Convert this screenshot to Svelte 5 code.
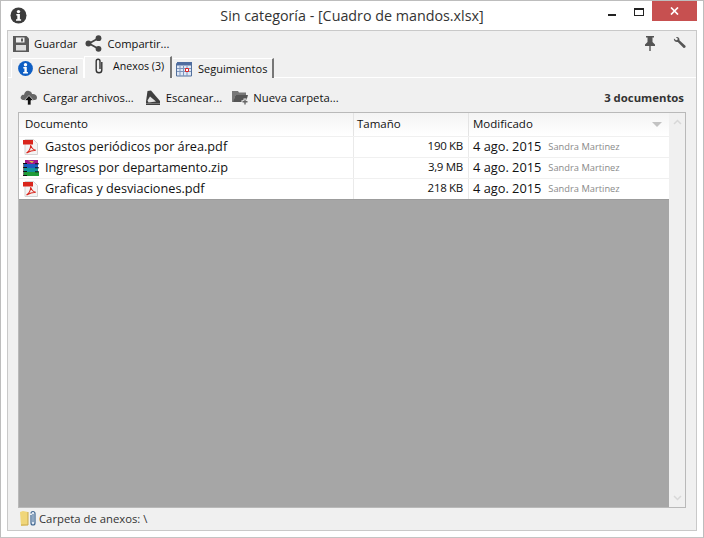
<script>
  const rows = [
    { name: 'Gastos periódicos por área.pdf', size: '190 KB', type: 'pdf' },
    { name: 'Ingresos por departamento.zip', size: '3,9 MB', type: 'zip' },
    { name: 'Graficas y desviaciones.pdf', size: '218 KB', type: 'pdf' }
  ];
</script>

<div class="window">
  <header class="titlebar">
    <svg class="app" width="17" height="17" viewBox="0 0 17 17"><circle cx="8.5" cy="8.5" r="8" fill="#3c3c3c"/><circle cx="8.5" cy="4.6" r="1.7" fill="#fff"/><path d="M6.3 7h3.600v5.200h1.200v1.600H6v-1.600h1.300V8.600h-1z" fill="#fff"/></svg>
    <div class="title">Sin categoría - [Cuadro de mandos.xlsx]</div>
    <div class="controls">
      <span class="ctl"><i class="min"></i></span>
      <span class="ctl"><i class="max"></i></span>
      <span class="close"><svg width="9" height="8" viewBox="0 0 9 8"><path d="M1 .5l7 7M8 .5l-7 7" stroke="#fff" stroke-width="1.700"/></svg></span>
    </div>
  </header>

  <div class="panel">
    <div class="toolbar">
      <button class="tool">
        <svg width="16" height="16" viewBox="0 0 16 16"><path d="M0 0h13.500L16 2.500V16H0z" fill="#5a5a5a"/><path d="M3 1.500h8.500v5H3z" fill="#eee"/><path d="M8 2.500h2v3H8z" fill="#5a5a5a"/><path d="M3 9h10v5.500H3z" fill="#ddd"/></svg>
        Guardar
      </button>
      <button class="tool share">
        <svg width="17" height="17" viewBox="0 0 17 17"><path d="M13 3.500L4 8.500l9 5" fill="none" stroke="#444" stroke-width="1.800"/><circle cx="13.500" cy="3.200" r="2.900" fill="#444"/><circle cx="3.400" cy="8.500" r="2.900" fill="#444"/><circle cx="13.500" cy="13.800" r="2.900" fill="#444"/></svg>
        Compartir...
      </button>
      <div class="spacer"></div>
      <svg class="pin" width="10" height="15" viewBox="0 0 10 15"><path d="M1 0h8v1.500H7.500V6L10 8.500V10H5.700v5H4.300v-5H0V8.500L2.500 6V1.500H1z" fill="#555"/></svg>
      <svg class="wrench" width="13" height="13" viewBox="0 0 13 13"><path d="M1 1.500L3 3.200l1.400-.3.300-1.500L2.900.2C5-.5 6.800 1 6.400 3.300l6 5.500c.9 1.200-.7 2.900-2 2L4.800 5C2.600 5.600.3 3.800 1 1.500z" fill="#555"/></svg>
    </div>

    <div class="tabs">
      <div class="tab first">
        <svg width="15" height="15" viewBox="0 0 15 15"><circle cx="7.500" cy="7.500" r="7.400" fill="#0f5fc4"/><circle cx="7.500" cy="3.800" r="1.700" fill="#fff"/><path d="M5.300 6h3.500v5h1.100v1.500H5.100V11h1.300V7.500H5.300z" fill="#fff"/></svg>
        <span>General</span>
      </div>
      <div class="tab active">
        <svg width="10" height="16" viewBox="0 0 10 16"><path d="M7.800 4v8a2.800 2.800 0 0 1-5.600 0V3.200a1.900 1.900 0 0 1 3.800 0V11" fill="none" stroke="#333" stroke-width="1.400"/></svg>
        <span>Anexos (3)</span>
      </div>
      <div class="tab third">
        <svg width="17" height="16" viewBox="0 0 17 16"><path d="M.5 2.500h15v12.500H.5z" fill="#dfe8f6" stroke="#53709c"/><path d="M1 1h15v3.500H1z" fill="#4f6d9f"/><path d="M4 5v10M7.500 5v10M11 5v10M1 7.500h14M1 10.500h14" stroke="#7d95bd"/><path d="M9.500 7.500h3v3h-3z" fill="#fff" stroke="#d22"/></svg>
        <span>Seguimientos</span>
      </div>
    </div>

    <div class="body">
      <div class="actions">
        <button class="act">
          <svg width="18" height="17" viewBox="0 0 18 17"><path d="M4 11C1 11 0 9 1 7.500 1.500 6 3 5.500 4 6 4.500 3 6.500 1 9 2c2 .5 3 2 3 3 2.500-.5 5 1 5 3.500S15 11 14 11z" fill="#666"/><path d="M9 6.500l4.500 5H11V16H7.500v-4.500H4.500z" fill="#111" stroke="#eee" stroke-width=".7"/></svg>
          Cargar archivos...
        </button>
        <button class="act scan">
          <svg width="16" height="16" viewBox="0 0 16 16"><path d="M1 15V11.500L2.500 1 6 .5l9 10.500v4z" fill="#3f3f3f"/><path d="M2.500 10.500l2.500-4 6 5-7.500 1z" fill="#e4e4e4"/><path d="M1 13.500h14" stroke="#777"/></svg>
          Escanear...
        </button>
        <button class="act folder">
          <svg width="17" height="16" viewBox="0 0 17 16"><path d="M0 1h6l1 1.500h7V5H3.500L1.500 12H0z" fill="#777"/><path d="M3.500 5H16l-2 7H1z" fill="#555"/><path d="M13 8.500v6.500M9.500 11.800h7" stroke="#f0f0f0" stroke-width="3"/><path d="M13 9.500v5M10.500 11.800h5" stroke="#666" stroke-width="1.400"/></svg>
          Nueva carpeta...
        </button>
        <div class="spacer"></div>
        <strong>3 documentos</strong>
      </div>

      <div class="table">
        <div class="main">
          <div class="thead">
            <div class="c1">Documento</div>
            <div class="c2">Tamaño</div>
            <div class="c3">Modificado<i class="sort"></i></div>
          </div>
          {#each rows as r}
            <div class="row">
              <div class="c1">
                {#if r.type === 'pdf'}
                  <svg width="16" height="16" viewBox="0 0 16 16"><path d="M2 .5h8.500l4 4v11H2z" fill="#f4f4f4" stroke="#d4d4d4"/><path d="M0 1h10v4.500H0z" fill="#d9251c"/><path d="M3.500 14c2.500-1.500 4-4.500 4.300-8 .5 2.800 2 4.700 5 5.200-3.200 0-6.500 1-9.300 2.800z" fill="none" stroke="#d9251c" stroke-width="1.100"/></svg>
                {:else}
                  <svg width="16" height="16" viewBox="0 0 16 16"><path d="M2 0h13v4H2z" fill="#a01a8c"/><path d="M5 .5l6 1-2 1.500z" fill="#e6c83c"/><path d="M1 4h14v4H1z" fill="#1a5fc0"/><path d="M1 8h14v4H1z" fill="#12929e"/><path d="M1 12h15v4H1z" fill="#1f9c38"/><path d="M0 3.500h4M0 7.500h4M0 11.500h4M0 15.500h4M12 3.800h4M12 7.800h4M12 11.800h4" stroke="#111"/><path d="M0 4v11" stroke="#222" stroke-width="1.200"/></svg>
                {/if}
                <span class="fname">{r.name}</span>
              </div>
              <div class="c2 num">{r.size}</div>
              <div class="c3"><span>4 ago. 2015</span><small>Sandra Martinez</small></div>
            </div>
          {/each}
          <div class="empty"></div>
        </div>
        <div class="scroll">
          <svg width="9" height="6" viewBox="0 0 9 6"><path d="M1 5l3.500-3.500L8 5" fill="none" stroke="#d8d8d8" stroke-width="1.500"/></svg>
          <svg width="9" height="6" viewBox="0 0 9 6"><path d="M1 1l3.500 3.500L8 1" fill="none" stroke="#d8d8d8" stroke-width="1.500"/></svg>
        </div>
      </div>

      <div class="footer">
        <svg width="17" height="17" viewBox="0 0 17 17"><path d="M0 2l3-1 5 1v13l-7 1z" fill="#f0d67a"/><path d="M8 2v13H1" fill="none" stroke="#c9a94c"/><path d="M11 5v8a2 2 0 0 0 4 0V3.500a2 2 0 0 0-4 0" fill="#dfe8f3" stroke="#3f6690" stroke-width="1.200"/><path d="M13 4v8" stroke="#3f6690"/></svg>
        <span>Carpeta de anexos: \</span>
      </div>
    </div>
  </div>
</div>

<style>
  :global(body) { margin: 0; }
  .window {
    box-sizing: border-box; width: 704px; height: 538px; background: #fff;
    border: 1px solid #bdbdbd; border-bottom-color: #c4c4c4; padding: 0 6px 6px;
    display: flex; flex-direction: column;
    font-family: "Open Sans", "Noto Sans", sans-serif; font-size: 11.300px; color: #111;
  }
  .titlebar { height: 29px; flex: none; display: flex; align-items: flex-start; position: relative; }
  .app { position: absolute; left: 3px; top: 6px; }
  .title { flex: 1; text-align: center; font-size: 14.300px; line-height: 20px; padding-top: 5px; color: #333; }
  .controls { position: absolute; right: 0; top: 0; display: flex; }
  .ctl { width: 25px; height: 20px; position: relative; }
  .min { position: absolute; left: 6px; top: 13px; width: 8px; height: 2px; background: #222; }
  .max { position: absolute; left: 7px; top: 7px; width: 8px; height: 5px; border: 1px solid #222; border-top-width: 2px; }
  .close { width: 45px; height: 20px; background: #c75050; display: flex; align-items: center; justify-content: center; }
  .panel {
    flex: 1; min-height: 0; display: flex; flex-direction: column; background: #f0f0f0;
    border: 1px solid #c9c9c9;
  }
  .toolbar { height: 25px; flex: none; display: flex; align-items: center; padding: 0 10px 0 5px; }
  button { all: unset; display: flex; align-items: center; }
  .tool { gap: 5px; margin-right: 8px; font-size: 11.200px; }
  .share { gap: 5px; margin-right: 0; }
  .spacer { flex: 1; }
  .pin { margin-right: 18px; }
  .tabs { height: 22px; flex: none; display: flex; align-items: flex-end; padding-left: 3px; box-sizing: border-box; position: relative; z-index: 1; margin-bottom: -1px; }
  .tab { box-sizing: border-box; display: flex; align-items: center; height: 20px; background: #f0f0f0; }
  .tab.first { width: 73px; gap: 5px; padding-left: 6px; border: 1px solid #fff; border-bottom: 0; border-radius: 2px 2px 0 0; font-size: 10.900px; }
  .tab.first span { padding-top: 1px; }
  .tab.active { width: 88px; height: 22px; gap: 9px; padding-left: 9px; border-top: 1px solid #fff; border-left: 1px solid #fff; border-right: 2px solid #777; padding-bottom: 3px; margin-right: 1px; font-size: 10.600px; }
  .tab.third { width: 101px; gap: 5px; padding-left: 3px; border-right: 2px solid #777; border-top: 1px solid #fff; font-size: 11px; }
  .body { flex: 1; min-height: 0; border-top: 1px solid #fff; display: flex; flex-direction: column; padding: 0 10px; }
  .actions { height: 34px; flex: none; display: flex; align-items: center; padding: 5px 2px 0 2px; box-sizing: border-box; }
  .act { gap: 5px; margin-right: 11px; }
  .act.scan { margin-right: 10px; }
  .act.folder { gap: 4px; }
  .actions strong { font-size: 11.350px; font-weight: 700; color: #333; }
  .table { flex: 1; min-height: 0; display: flex; border: 1px solid #b9b9b9; background: #f0f0f0; }
  .main { flex: 1; min-width: 0; display: flex; flex-direction: column; }
  .thead { height: 23px; flex: none; display: flex; background: linear-gradient(#f4f4f4, #ffffff); align-items: stretch; font-size: 11.500px; }
  .thead > div { display: flex; align-items: center; padding-left: 6px; position: relative; border-right: 1px solid #e4e4e4; padding-bottom: 3px; box-sizing: border-box; }
  .c1 { width: 335px; box-sizing: border-box; }
  .c2 { width: 115px; box-sizing: border-box; }
  .c3 { flex: 1; box-sizing: border-box; }
  .thead .c2 { padding-left: 3px; }
  .thead .c3 { padding-left: 4px; border-right: 0; }
  .sort { position: absolute; right: 7px; top: 9px; border: 5px solid transparent; border-top: 5px solid #c2c2c2; border-bottom: 0; }
  .row { height: 21px; flex: none; display: flex; background: #fff; border-top: 1px solid #f0f0f0; box-sizing: border-box; font-size: 12.800px; }
  .row > div { display: flex; align-items: center; border-right: 1px solid #eaeaea; padding-bottom: 3px; box-sizing: border-box; }
  .row .c1 { padding-left: 4px; gap: 6px; }
  .row .c1 svg { margin-top: 3px; }
  .fname { font-size: 12.700px; }
  .row .num { justify-content: flex-end; padding-right: 5px; font-size: 11.500px; letter-spacing: -.3px; }
  .row .c3 { padding-left: 4px; border-right: 0; gap: 7px; }
  small { font-size: 9.300px; color: #8a8a8a; padding-top: 2px; }
  .empty { flex: 1; background: #a6a6a6; border-top: 1px solid #9c9c9c; }
  .scroll { width: 16px; flex: none; background: #f0f0f0; display: flex; flex-direction: column; justify-content: space-between; align-items: center; padding: 6px 0; box-sizing: border-box; }
  .footer { height: 22px; flex: none; display: flex; align-items: center; gap: 2px; padding: 0 0 2px 2px; box-sizing: border-box; color: #333; margin-right: -10px; }
</style>
